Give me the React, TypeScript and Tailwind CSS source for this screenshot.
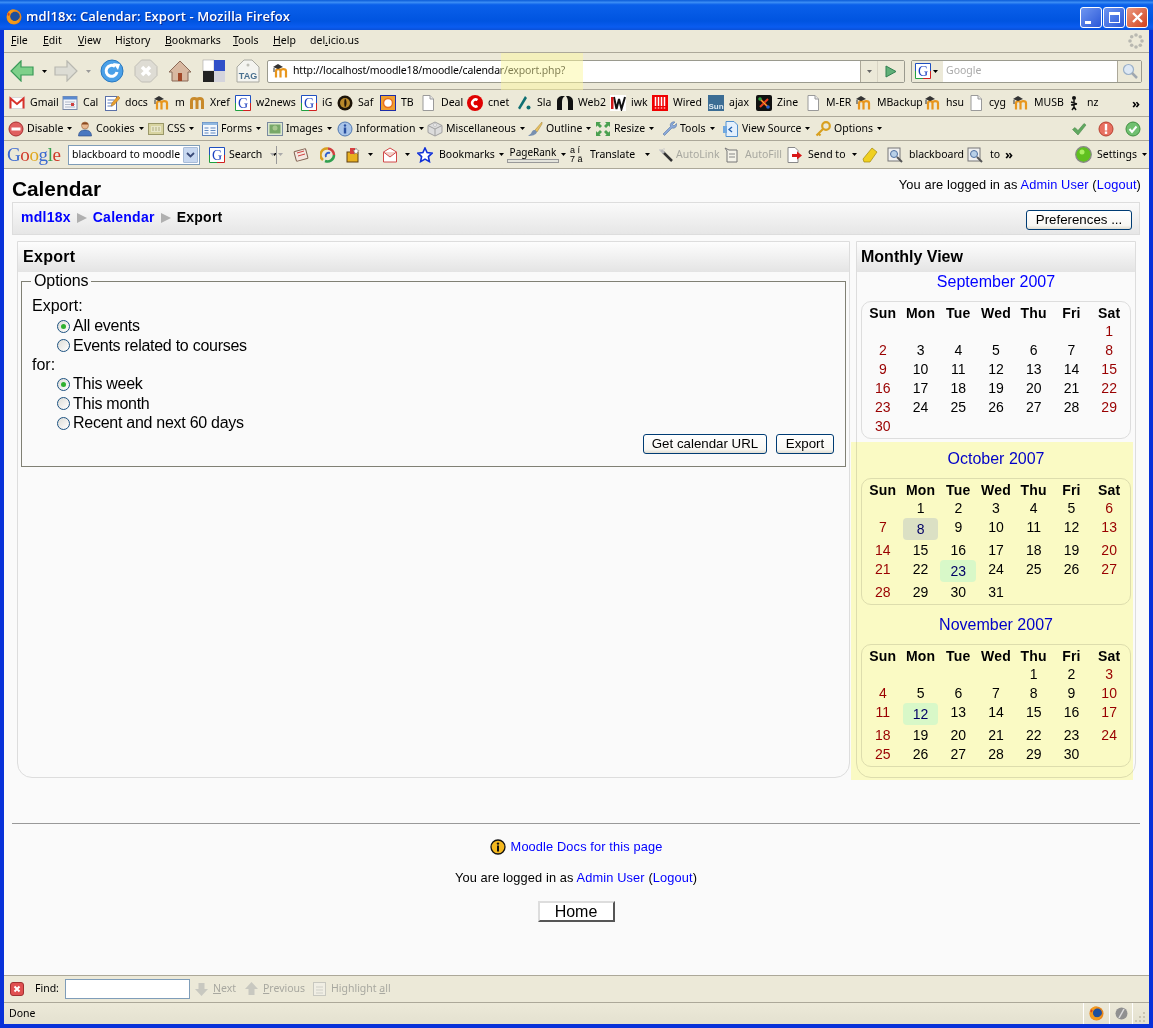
import React from "react";

const S = ({ children, s = 16, v = 16 }: { children: React.ReactNode; s?: number; v?: number }) => (
  <svg width={s} height={s} viewBox={`0 0 ${v} ${v}`} className="shrink-0 block">{children}</svg>
);

const Fx = ({ s = 16 }: { s?: number }) => (
  <S s={s}>
    <circle cx="8" cy="8" r="7.500" fill="#e8861a" />
    <circle cx="9" cy="7.500" r="4.800" fill="#1f4f9c" />
    <path d="M1 7c0-4 3-6.500 6-6.500 1 0 2 .2 3 .7-2 0-3 1-3.400 2C4.500 4 3.500 6 4 8.500c.5 2.500 3 4 5.500 3.500 2-.4 3.500-2 4-3.500.2 2-1.500 6-5.500 6.500C3.500 15.500 .8 11.500 1 7z" fill="#f39a1c" />
    <path d="M2 3c.5 1 1 1.500 2 1.500L3 7 1.500 6z" fill="#d9441a" />
  </S>
);
const Caret = ({ c = "#000" }: { c?: string }) => (
  <svg width="5" height="3" viewBox="0 0 5 3" className="shrink-0 block"><path d="M0 0h5L2.500 3z" fill={c} /></svg>
);
const Moodle = ({ s = 16 }: { s?: number }) => (
  <S s={s}>
    <path d="M3 14.500V8c0-2.500 4.500-2.500 4.500 0v6.500M7.500 8c0-2.500 5.500-2.500 5.500 0v6.500" fill="none" stroke="#e8961c" strokeWidth="2.200" />
    <path d="M0 4l5-3 5 3-5 2z" fill="#333" />
    <path d="M1 5v4" stroke="#333" strokeWidth="1" />
  </S>
);
const MBrown = () => (
  <S>
    <path d="M2.500 14V6c0-3.500 5.500-3.500 5.500 0v8M8 6c0-3.500 5.500-3.500 5.500 0v8" fill="none" stroke="#c98a2a" strokeWidth="3" />
  </S>
);
const G = () => (
  <svg width="16" height="16" viewBox="0 0 16 16" className="shrink-0 block">
    <rect x="1" y="1" width="14" height="14" fill="#fff" />
    <path d="M.5 8V.5H15.500V8" fill="none" stroke="#2050c0" />
    <path d="M15.500 8V15.500H8" fill="none" stroke="#d02020" />
    <path d="M8 15.500H.5V8" fill="none" stroke="#20a040" />
    <text x="8" y="13" textAnchor="middle" fontFamily="'Liberation Serif',serif" fontSize="14" fill="#1a3fc0">G</text>
  </svg>
);
const Page = () => (
  <S><path d="M3 .5h7l3.500 3.500v11.500H3z" fill="#fff" stroke="#9a9a9a" /><path d="M10 .5V4h3.500" fill="#e8e8e8" stroke="#9a9a9a" /></S>
);
const Gmail = () => (
  <S><rect x=".5" y="2.500" width="15" height="11" fill="#fff" stroke="#d8d8d8" /><path d="M1.500 13.500V3.500L8 9l6.500-5.500v10" fill="none" stroke="#d8322a" strokeWidth="2" /></S>
);
const Cal = () => (
  <S><rect x="1" y="1.500" width="14" height="13" fill="#f4f6fa" stroke="#7a8aa8" /><rect x="1" y="1.500" width="14" height="3" fill="#5a8ad0" /><path d="M3 7h10M3 9.500h10M3 12h10" stroke="#b0b8c8" /><rect x="9" y="8" width="3" height="3" fill="#d04040" /></S>
);
const Docs = () => (
  <S><rect x="1.500" y="1.500" width="11" height="14" fill="#fff" stroke="#5a70a8" /><path d="M3.500 5h7M3.500 8h7M3.500 11h5" stroke="#6080c0" /><path d="M14 1l2 2-6 7-3 1 1-3z" fill="#e8a030" stroke="#a06818" strokeWidth=".5" /></S>
);
const Saf = () => (
  <S><circle cx="8" cy="8" r="7.500" fill="#1c1408" /><circle cx="8" cy="8" r="5" fill="#b8882a" /><path d="M8 3.500c2 1.500 2 7 0 9-1-2-1-7 0-9z" fill="#201408" /></S>
);
const TB = () => (
  <S><rect x=".5" y=".5" width="15" height="15" fill="#f0a030" stroke="#1c2ca8" /><circle cx="8" cy="8" r="4.500" fill="#fff" stroke="#e87020" strokeWidth="1.500" /></S>
);
const Cnet = () => (
  <S><circle cx="8" cy="8" r="8" fill="#e00000" /><path d="M10.500 5a3.500 3.500 0 1 0 0 6" fill="none" stroke="#fff" strokeWidth="2.500" /></S>
);
const Sla = () => (
  <S><path d="M9 1L2 13l2 1.500L11 3z" fill="#0f6f72" /><circle cx="12.500" cy="12.500" r="2" fill="#0f6f72" /></S>
);
const Web2 = () => (
  <S><path d="M0 15V6c0-4 4-5 5-5h3c-2 1-3 3-3 6v8zM16 15V6c0-4-4-5-5-5h-2c1.500 2 2 4 2 6v8z" fill="#111" /></S>
);
const Iwk = () => (
  <S><rect width="16" height="16" fill="#fff" /><path d="M4 2l2.500 12L9 4l2.500 10L15 2" fill="none" stroke="#111" strokeWidth="2" /><rect x="1" y="2" width="2.500" height="12" fill="#d01818" /></S>
);
const Wired = () => (
  <S><rect width="16" height="16" fill="#f00000" /><path d="M3.500 2v9M6.500 2v9M9.500 2v9M12.500 2v9M3.500 12.500v1M6.500 12.500v1M9.500 12.500v1M12.500 12.500v1" stroke="#fff" strokeWidth="1.500" /></S>
);
const Ajax = () => (
  <svg width="16" height="16" viewBox="0 0 16 16" className="shrink-0 block"><rect width="16" height="16" fill="#3c6d94" /><text x="8" y="13.500" textAnchor="middle" fontFamily="'Liberation Sans',sans-serif" fontSize="8" fontWeight="700" fill="#dde8f0">Sun</text></svg>
);
const Zine = () => (
  <S><rect width="16" height="16" rx="2" fill="#111" /><path d="M4 4l8 8M12 4l-8 8" stroke="#e84020" strokeWidth="2" /><path d="M4 4l8 8" stroke="#e8c020" strokeWidth="1" /><circle cx="4" cy="4" r="1.800" fill="#30a040" /><circle cx="12" cy="12" r="1.800" fill="#2060d0" /></S>
);
const Nz = () => (
  <S><circle cx="8" cy="3" r="2" fill="#111" /><path d="M8 5v7M5 7l6 2M5 10l6-1M6 15l2-3 2 3" stroke="#111" strokeWidth="1.500" fill="none" /></S>
);
const Disable = () => (
  <S><circle cx="8" cy="8" r="7" fill="#e06060" stroke="#a83030" /><rect x="3.500" y="6.500" width="9" height="3" fill="#fff" /></S>
);
const Cookies = () => (
  <S><circle cx="8" cy="4.500" r="3.500" fill="#e8b890" stroke="#a06840" strokeWidth=".6" /><path d="M4.500 3.500c1-3 6-3 7 0z" fill="#8a4a20" /><path d="M1.500 15c0-4 2.500-6 6.500-6s6.500 2 6.500 6z" fill="#4a78c0" stroke="#2a4880" strokeWidth=".6" /></S>
);
const Css = () => (
  <svg width="16" height="16" viewBox="0 0 16 16" className="shrink-0 block"><rect x=".5" y="2.500" width="15" height="11" fill="#d8d4a0" stroke="#9a9868" /><rect x="3" y="5" width="10" height="6" fill="#e8e6c8" /><path d="M4 7h8M4 9h8" stroke="#b0ae80" strokeDasharray="2 1" /></svg>
);
const Forms = () => (
  <S><rect x=".5" y="1.500" width="15" height="13" fill="#f4f8fc" stroke="#5a80b8" /><rect x=".5" y="1.500" width="15" height="2.500" fill="#90b8e0" /><path d="M2.500 7h4M2.500 9.500h4M2.500 12h4M8.500 7h5M8.500 9.500h5M8.500 12h5" stroke="#6088c0" /></S>
);
const Images = () => (
  <S><rect x=".5" y="1.500" width="15" height="13" fill="#dce8d0" stroke="#7a8aa0" /><rect x="2.500" y="3.500" width="11" height="9" fill="#78a868" /><circle cx="8" cy="7" r="2.500" fill="#a8c890" /></S>
);
const Info = () => (
  <S><circle cx="8" cy="8" r="7" fill="#a8c4e8" stroke="#5078b0" /><circle cx="8" cy="4.500" r="1.200" fill="#2a50a0" /><rect x="6.800" y="6.500" width="2.400" height="6" fill="#2a50a0" /></S>
);
const Misc = () => (
  <S><path d="M8 1l7 3.500v7L8 15l-7-3.500v-7z" fill="#dcdcdc" stroke="#a0a0a0" /><path d="M1 4.500L8 8l7-3.500M8 8v7" fill="none" stroke="#a0a0a0" /><circle cx="8" cy="4" r="1.500" fill="#f0f0f0" stroke="#a8a8a8" strokeWidth=".5" /></S>
);
const Outline = () => (
  <S><path d="M15 1l-7 8 2 2 5-8z" fill="#e8c060" stroke="#a08030" strokeWidth=".5" /><path d="M8 9c-3 0-3 2-4 3.500L1 15c4 0 8-1 9-4z" fill="#7890b0" /></S>
);
const Resize = () => (
  <S><path d="M1 1h5L4.500 2.500 7 5 5 7 2.500 4.500 1 6zM15 1v5l-1.500-1.500L11 7 9 5l2.500-2.500L10 1zM1 15v-5l1.500 1.500L5 9l2 2-2.500 2.500L6 15zM15 15h-5l1.500-1.500L9 11l2-2 2.500 2.500L15 10z" fill="#4aa050" /></S>
);
const Tools = () => (
  <S><path d="M2 13l7.500-7.500a3.500 3.500 0 0 1 4.500-4.500l-2.500 2.500 1.500 1.500L15.500 2.500a3.500 3.500 0 0 1-4.500 4.500L3.500 14.500z" fill="#8aa8d8" stroke="#5878a8" strokeWidth=".6" /></S>
);
const Source = () => (
  <S><path d="M3 .5h8l3.500 3.500v11.500H3z" fill="#e4f0fc" stroke="#5090d0" /><path d="M9 6L6 8.500 9 11" fill="none" stroke="#2060b0" strokeWidth="1.300" /><rect x="0" y="5" width="4" height="7" fill="#70a8e0" /></S>
);
const Key = () => (
  <S><circle cx="11" cy="5" r="3.800" fill="none" stroke="#d8a020" strokeWidth="2.200" /><path d="M8 8l-6.500 6.500M3.500 12.500l2 2" stroke="#d8a020" strokeWidth="2.200" /></S>
);
const Check = () => (
  <S><path d="M1.500 8.500l2.500-2 3 3 6-7 2 1.500-8 10z" fill="#60a860" stroke="#408040" strokeWidth=".5" /></S>
);
const Warn = () => (
  <S><circle cx="8" cy="8" r="7" fill="#e87060" stroke="#b84030" /><rect x="6.800" y="3" width="2.400" height="6.500" fill="#fff" /><rect x="6.800" y="10.500" width="2.400" height="2.400" fill="#fff" /></S>
);
const Ok = () => (
  <S><circle cx="8" cy="8" r="7" fill="#70c070" stroke="#409040" /><path d="M4.500 8l2.500 3 4.500-5.500" fill="none" stroke="#fff" strokeWidth="2" /></S>
);
const SearchDoc = () => (
  <S><rect x="1" y="1" width="12" height="13" fill="#f0f0f0" stroke="#777" /><circle cx="7" cy="7" r="3.500" fill="#b8d0e8" stroke="#5070a0" /><path d="M10 10l5 5" stroke="#555" strokeWidth="2" /></S>
);

function Label({ t, c = "text-black" }: { t: string; c?: string }) {
  return <span className={`whitespace-nowrap ${c}`}>{t}</span>;
}

const bookmarks: [string, string, React.ReactNode][] = [
  ["w-[53px]", "Gmail", <Gmail />],
  ["w-[42px]", "Cal", <Cal />],
  ["w-[50px]", "docs", <Docs />],
  ["w-[35px]", "m", <Moodle />],
  ["w-[46px]", "Xref", <MBrown />],
  ["w-[66px]", "w2news", <G />],
  ["w-[36px]", "iG", <G />],
  ["w-[43px]", "Saf", <Saf />],
  ["w-[40px]", "TB", <TB />],
  ["w-[47px]", "Deal", <Page />],
  ["w-[49px]", "cnet", <Cnet />],
  ["w-[41px]", "Sla", <Sla />],
  ["w-[53px]", "Web2", <Web2 />],
  ["w-[42px]", "iwk", <Iwk />],
  ["w-[56px]", "Wired", <Wired />],
  ["w-[48px]", "ajax", <Ajax />],
  ["w-[49px]", "Zine", <Zine />],
  ["w-[51px]", "M-ER", <Page />],
  ["w-[69px]", "MBackup", <Moodle />],
  ["w-[43px]", "hsu", <Moodle />],
  ["w-[45px]", "cyg", <Page />],
  ["w-[53px]", "MUSB", <Moodle />],
  ["w-[48px]", "nz", <Nz />],
];

const dev: [string, string, React.ReactNode][] = [
  ["w-[69px]", "Disable", <Disable />],
  ["w-[71px]", "Cookies", <Cookies />],
  ["w-[54px]", "CSS", <Css />],
  ["w-[65px]", "Forms", <Forms />],
  ["w-[70px]", "Images", <Images />],
  ["w-[90px]", "Information", <Info />],
  ["w-[100px]", "Miscellaneous", <Misc />],
  ["w-[68px]", "Outline", <Outline />],
  ["w-[66px]", "Resize", <Resize />],
  ["w-[62px]", "Tools", <Tools />],
  ["w-[92px]", "View Source", <Source />],
  ["w-[80px]", "Options", <Key />],
];

function Menu() {
  const items: [string, string, string, string][] = [
    ["w-[32px]", "", "F", "ile"],
    ["w-[35px]", "", "E", "dit"],
    ["w-[37px]", "", "V", "iew"],
    ["w-[50px]", "Hi", "s", "tory"],
    ["w-[68px]", "", "B", "ookmarks"],
    ["w-[40px]", "", "T", "ools"],
    ["w-[37px]", "", "H", "elp"],
    ["w-[60px]", "del", ".", "icio.us"],
  ];
  return (
    <div className="h-[23px] flex items-center pl-[7px] bg-[#ece9d8] border-b border-[#aca899]">
      {items.map(([w, a, u, b]) => (
        <div key={a + u + b} className={`${w} shrink-0 whitespace-nowrap`}>
          {a}<span className="underline">{u}</span>{b}
        </div>
      ))}
      <div className="ml-auto mr-[5px]">
        <svg width="16" height="16" viewBox="0 0 16 16" className="block">
          <g fill="#b8b8b0">
            <circle cx="8" cy="2" r="1.800" /><circle cx="12.300" cy="3.700" r="1.800" /><circle cx="14" cy="8" r="1.800" /><circle cx="12.300" cy="12.300" r="1.800" />
            <circle cx="8" cy="14" r="1.800" /><circle cx="3.700" cy="12.300" r="1.800" /><circle cx="2" cy="8" r="1.800" /><circle cx="3.700" cy="3.700" r="1.800" />
          </g>
        </svg>
      </div>
    </div>
  );
}

function Nav() {
  return (
    <div className="h-[37px] flex items-center bg-[#ece9d8] border-b border-[#aca899] pl-[6px] relative">
      <svg width="24" height="22" viewBox="0 0 24 22" className="shrink-0 block">
        <path d="M11 1L1 11l10 10v-6h12V7H11z" fill="#7ed08a" stroke="#3a9a58" strokeWidth="1.200" />
      </svg>
      <div className="ml-[8px] w-[12px]"><Caret /></div>
      <svg width="24" height="22" viewBox="0 0 24 22" className="shrink-0 block">
        <path d="M13 1l10 10-10 10v-6H1V7h12z" fill="#dcdcd4" stroke="#b8b8b0" strokeWidth="1.200" />
      </svg>
      <div className="ml-[8px] w-[14px]"><Caret c="#999" /></div>
      <svg width="24" height="24" viewBox="0 0 24 24" className="shrink-0 block">
        <circle cx="12" cy="12" r="11" fill="#4aa0e8" stroke="#2878c0" />
        <path d="M17 13a5.500 5.500 0 1 1-2-5.500" fill="none" stroke="#fff" strokeWidth="3" />
        <path d="M13 4l7 1-2 6z" fill="#fff" />
      </svg>
      <div className="w-[10px]" />
      <svg width="24" height="24" viewBox="0 0 24 24" className="shrink-0 block">
        <path d="M7.500 1h9L23 7.500v9L16.500 23h-9L1 16.500v-9z" fill="#dedcd4" stroke="#c0beb6" />
        <path d="M8 8l8 8M16 8l-8 8" stroke="#fff" strokeWidth="3.500" />
      </svg>
      <div className="w-[10px]" />
      <svg width="24" height="24" viewBox="0 0 24 24" className="shrink-0 block">
        <path d="M12 2L1 13h3v9h16v-9h3z" fill="#d8b8a0" stroke="#8a6a58" />
        <rect x="10" y="14" width="4" height="8" fill="#a04828" />
      </svg>
      <div className="w-[10px]" />
      <svg width="24" height="24" viewBox="0 0 24 24" className="shrink-0 block">
        <rect x="1" y="1" width="11" height="11" fill="#fff" stroke="#999" strokeWidth=".5" />
        <rect x="12" y="1" width="11" height="11" fill="#3050c8" />
        <rect x="1" y="12" width="11" height="11" fill="#222" />
        <rect x="12" y="12" width="11" height="11" fill="#d4d4dc" />
      </svg>
      <div className="w-[10px]" />
      <svg width="24" height="24" viewBox="0 0 24 24" className="shrink-0 block">
        <path d="M8 1h8l7 7v15H1V8z" fill="#f4f4f0" stroke="#a8a8a0" />
        <circle cx="12" cy="6" r="1.500" fill="#c0c0b8" />
        <text x="12" y="20" textAnchor="middle" fontFamily="'Liberation Sans',sans-serif" fontSize="9" fontWeight="700" fill="#4a7090">TAG</text>
      </svg>
      <div className="w-[7px]" />
      <div className="w-[638px] h-[23px] flex items-stretch bg-white border border-[#9a9a8e] rounded-[2px] shrink-0">
        <div className="flex items-center pl-[5px] gap-[4px] flex-1">
          <Moodle />
          <span className="text-[10.5px] tracking-[-0.15px]">http://localhost/moodle18/moodle/calendar/export.php?</span>
        </div>
        <div className="w-[17px] border-l border-[#aca899] bg-[#ece9d8] flex items-center justify-center"><Caret c="#666" /></div>
        <div className="w-[27px] border-l border-[#d8d4c4] bg-[#ece9d8] flex items-center justify-center">
          <svg width="12" height="13" viewBox="0 0 12 13" className="block"><path d="M1 1l10 5.500L1 12z" fill="#60b078" stroke="#308050" /></svg>
        </div>
      </div>
      <div className="w-[6px]" />
      <div className="w-[231px] h-[23px] flex items-stretch bg-white border border-[#9a9a8e] rounded-[2px] shrink-0">
        <div className="w-[31px] bg-[#ece9d8] flex items-center pl-[3px] gap-[2px]"><G /><Caret /></div>
        <div className="flex-1 flex items-center pl-[3px] text-[#aaa]">Google</div>
        <div className="w-[24px] border-l border-[#aca899] bg-[#ece9d8] flex items-center justify-center">
          <svg width="16" height="16" viewBox="0 0 16 16" className="block"><circle cx="6.500" cy="6.500" r="5" fill="#dde8f4" stroke="#9ab0c8" strokeWidth="1.200" /><path d="M10 10l5 5" stroke="#a0a8b0" strokeWidth="2.500" /></svg>
        </div>
      </div>
      <div className="absolute left-[497px] top-0 w-[82px] h-[37px] bg-[#fcf8a0] opacity-50 pointer-events-none" />
    </div>
  );
}

function Bookmarks() {
  return (
    <div className="h-[27px] flex items-center bg-[#ece9d8] border-b border-[#aca899] pl-[5px]">
      {bookmarks.map(([w, t, ic]) => (
        <div key={t} className={`${w} flex items-center gap-[5px] shrink-0`}>{ic}<Label t={t} /></div>
      ))}
      <div className="ml-auto mr-[9px] text-[13px] font-bold leading-none">»</div>
    </div>
  );
}

function DevBar() {
  return (
    <div className="h-[24px] flex items-center bg-[#ece9d8] border-b border-[#aca899] pl-[4px]">
      {dev.map(([w, t, ic]) => (
        <div key={t} className={`${w} flex items-center shrink-0`}>
          <div className="w-[19px] shrink-0">{ic}</div>
          <Label t={t} />
          <div className="ml-[4px]"><Caret /></div>
        </div>
      ))}
      <div className="ml-auto flex gap-[11px] pr-[8px]"><Check /><Warn /><Ok /></div>
    </div>
  );
}

function GoogleBar() {
  return (
    <div className="h-[28px] flex items-center bg-[#ece9d8] border-b border-[#aca899] pl-[2px]">
      <div className="w-[62px] pl-[1px] [font-family:'Liberation_Serif',serif] text-[19px] tracking-[-0.4px] leading-none shrink-0">
        <span className="text-[#3a68d0]">G</span><span className="text-[#d03a2a]">o</span><span className="text-[#e0a820]">o</span><span className="text-[#3a68d0]">g</span><span className="text-[#3aa050]">l</span><span className="text-[#d03a2a]">e</span>
      </div>
      <div className="w-[132px] h-[20px] bg-white border border-[#7f9db9] flex items-center pl-[3px] shrink-0">
        <span className="flex-1 whitespace-nowrap">blackboard to moodle</span>
        <div className="w-[15px] h-[16px] mr-px bg-[#c8d8f0] border border-[#a8bcd8] rounded-[1px] flex items-center justify-center">
          <svg width="9" height="6" viewBox="0 0 9 6" className="block"><path d="M1 1l3.500 3.500L8 1" fill="none" stroke="#3a4a78" strokeWidth="1.800" /></svg>
        </div>
      </div>
      <div className="w-[9px]" />
      <div className="w-[61px] flex items-center gap-[4px] shrink-0"><G /><Label t="Search" /><div className="ml-[6px]"><Caret /></div></div>
      <div className="w-[23px] flex items-center gap-[1px] shrink-0">
        <Caret c="#aaa" /><div className="w-px h-[18px] bg-[#999]" /><Caret c="#aaa" />
      </div>
      <div className="w-[27px] shrink-0">
        <S><rect x="2" y="3" width="12" height="10" rx="1" fill="#f4e8e0" stroke="#806050" transform="rotate(-15 8 8)" /><path d="M4 6l7-2M5 9l7-2" stroke="#d04040" /></S>
      </div>
      <div className="w-[25px] shrink-0">
        <S><path d="M3 13A6.500 6.500 0 0 1 8 1.500" fill="none" stroke="#d8a020" strokeWidth="2.500" /><path d="M8 1.500A6.500 6.500 0 0 1 14 8" fill="none" stroke="#d04040" strokeWidth="2.500" /><path d="M14 8a6.500 6.500 0 0 1-9 6" fill="none" stroke="#30a050" strokeWidth="2.500" /><path d="M6 10a3 3 0 0 1 4-4" fill="none" stroke="#3060d0" strokeWidth="2" /></S>
      </div>
      <div className="w-[37px] flex items-center gap-[7px] shrink-0">
        <S><rect x="2" y="5" width="11" height="10" fill="#e8b020" stroke="#604010" /><rect x="5" y="1" width="5" height="6" fill="#d84040" /><path d="M11 1l1 2 2 .5-1.500 1.500.3 2-1.800-1-1.800 1 .3-2L8 3.500 10 3z" fill="#fff" stroke="#444" strokeWidth=".4" /></S>
        <Caret />
      </div>
      <div className="w-[35px] flex items-center gap-[7px] shrink-0">
        <S><path d="M1.500 5L8 1l6.500 4v10h-13z" fill="#fff" stroke="#d04848" /><path d="M1.500 5L8 10l6.500-5" fill="#f4d0c8" stroke="#d04848" /></S>
        <Caret />
      </div>
      <div className="w-[22px] shrink-0">
        <S><path d="M8 1l2.100 4.600 5 .6-3.700 3.400 1 5L8 12.100 3.600 14.600l1-5L.9 6.200l5-.6z" fill="#fff" stroke="#1030d8" strokeWidth="1.600" /></S>
      </div>
      <div className="w-[66px] flex items-center shrink-0"><Label t="Bookmarks" /><div className="ml-[4px]"><Caret /></div></div>
      <div className="w-[56px] flex flex-col items-center shrink-0">
        <span className="text-[10px] leading-[11px] whitespace-nowrap">PageRank</span>
        <div className="w-[52px] h-[4px] mt-[1px] bg-[#e4e4dc] border border-[#999]" />
      </div>
      <div className="w-[9px] shrink-0"><Caret /></div>
      <div className="w-[20px] text-[9px] leading-[9px] shrink-0 [font-family:'Liberation_Sans',sans-serif]">
        <div>a í</div><div>7 ä</div>
      </div>
      <div className="w-[67px] flex items-center shrink-0"><Label t="Translate" /><div className="ml-[10px]"><Caret /></div></div>
      <div className="w-[67px] flex items-center gap-[3px] shrink-0">
        <S><path d="M2 3l2 0M3 2v2M7 1v2" stroke="#ccc" /><path d="M6 5l9 9" stroke="#333" strokeWidth="2.500" /><path d="M4 3l3 3" stroke="#bbb" strokeWidth="3" /></S>
        <Label t="AutoLink" c="text-[#a8a8a0]" />
      </div>
      <div className="w-[62px] flex items-center gap-[5px] shrink-0">
        <S><path d="M1 1l4 2h8v12H3V4z" fill="#f4f2e8" stroke="#777" /><path d="M5 7h6M5 10h6" stroke="#888" /></S>
        <Label t="AutoFill" c="text-[#a8a8a0]" />
      </div>
      <div className="w-[76px] flex items-center gap-[6px] shrink-0">
        <S><path d="M2 .5h7l3 3V15.500H2z" fill="#fff" stroke="#888" /><path d="M6 7h5V4.500l5 4-5 4V10H6z" fill="#d81818" /></S>
        <Label t="Send to" /><Caret />
      </div>
      <div className="w-[25px] shrink-0">
        <S><path d="M10 1l5 4-7 10-6 0-1-3z" fill="#f0d020" stroke="#a08810" strokeWidth=".7" /></S>
      </div>
      <div className="w-[80px] flex items-center gap-[6px] shrink-0">
        <SearchDoc />
        <Label t="blackboard" />
      </div>
      <div className="w-[38px] flex items-center gap-[7px] shrink-0">
        <SearchDoc />
        <Label t="to" />
      </div>
      <div className="text-[13px] font-bold leading-none">»</div>
      <div className="ml-auto flex items-center gap-[5px] pr-[2px]">
        <svg width="17" height="17" viewBox="0 0 17 17" className="block"><circle cx="8.500" cy="8.500" r="7.800" fill="#60c020" stroke="#888" strokeWidth="1.200" /><circle cx="7" cy="6" r="2.500" fill="#a8f060" /></svg>
        <Label t="Settings" /><Caret />
      </div>
    </div>
  );
}

function Radio({ on }: { on?: boolean }) {
  return (
    <div className="w-[13px] h-[13px] rounded-full border border-[#1d5281] bg-[linear-gradient(135deg,#dcdcd7,#ffffff)] flex items-center justify-center shrink-0">
      {on && <div className="w-[5px] h-[5px] rounded-full bg-[#2fb030]" />}
    </div>
  );
}
function Opt({ on, t, h = "h-[19px]" }: { on?: boolean; t: string; h?: string }) {
  return (
    <div className={`${h} flex items-center pl-[25px] gap-[3px] whitespace-nowrap tracking-[-0.27px]`}>
      <Radio on={on} />{t}
    </div>
  );
}

function XpBtn({ t, w }: { t: string; w: string }) {
  return (
    <div className={`${w} h-[20px] flex items-center justify-center border border-[#003c74] rounded-[3px] bg-[linear-gradient(#ffffff,#f8f7f3_80%,#e0ddd2)] text-[13.3px] leading-none whitespace-nowrap`}>
      {t}
    </div>
  );
}

const A = ({ children }: { children: React.ReactNode }) => <span className="text-[#0000ff]">{children}</span>;

function Month({ title, first, days, hl, tall, mt }: { title: string; first: number; days: number; hl: Record<number, string>; tall: number[]; mt: string }) {
  const cells: (number | null)[] = [];
  for (let i = 0; i < first; i++) cells.push(null);
  for (let i = 1; i <= days; i++) cells.push(i);
  while (cells.length % 7) cells.push(null);
  const rows: (number | null)[][] = [];
  for (let i = 0; i < cells.length; i += 7) rows.push(cells.slice(i, i + 7));
  const heads = ["Sun", "Mon", "Tue", "Wed", "Thu", "Fri", "Sat"];
  return (
    <>
      <div className={`${mt} h-[19px] leading-[19px] text-center text-[16px] text-[#0000ff]`}>{title}</div>
      <div className="mt-[10px] mx-[4px] border border-[#dddddd] rounded-[10px] pt-[2px] pb-[2px] px-[2px]">
        <div className="grid grid-cols-7 h-[18px]">
          {heads.map((h) => (
            <div key={h} className="h-[19px] leading-[19px] text-center font-bold text-[14px] tracking-[0.2px]">{h}</div>
          ))}
        </div>
        {rows.map((r, ri) => (
          <div key={ri} className={`grid grid-cols-7 ${tall.includes(ri) ? "h-[23px]" : "h-[19px]"}`}>
            {r.map((d, ci) => {
              const weekend = ci === 0 || ci === 6;
              if (d !== null && hl[d]) {
                return (
                  <div key={ci} className={`h-[22px] leading-[23px] mx-[1px] rounded-[4px] text-center text-[14px] text-[#000080] ${hl[d]}`}>{d}</div>
                );
              }
              return (
                <div key={ci} className={`h-[19px] leading-[19px] text-center text-[14px] ${weekend ? "text-[#990000]" : "text-black"}`}>{d}</div>
              );
            })}
          </div>
        ))}
      </div>
    </>
  );
}

function Content() {
  return (
    <div className="flex-1 bg-[#fafafa] pl-[8px] pr-[9px] [font-family:'Liberation_Sans',Arial,sans-serif] text-black relative">
      <div className="h-[33px] flex justify-between -mr-px">
        <h1 className="text-[20.8px] font-bold leading-[40px]">Calendar</h1>
        <div className="text-[12.8px] leading-[32px] tracking-[0.125px] whitespace-nowrap">You are logged in as <A>Admin User</A> (<A>Logout</A>)</div>
      </div>
      <div className="h-[33px] border border-[#dddddd] bg-[linear-gradient(#fafafa,#e6e6e6)] flex items-center justify-between pl-[8px] pr-[7px]">
        <div className="flex items-center text-[14px] font-bold tracking-[0.25px] whitespace-nowrap -mt-[2px]">
          <span className="text-[#0000ff]">mdl18x</span>
          <svg width="10" height="10" viewBox="0 0 10 10" className="mx-[6px] block"><path d="M0 0l10 5-10 5z" fill="#b0b0b0" /></svg>
          <span className="text-[#0000ff]">Calendar</span>
          <svg width="10" height="10" viewBox="0 0 10 10" className="mx-[6px] block"><path d="M0 0l10 5-10 5z" fill="#b0b0b0" /></svg>
          <span>Export</span>
        </div>
        <div className="mt-[3px]"><XpBtn t="Preferences ..." w="w-[106px]" /></div>
      </div>
      <div className="flex mt-[6px] ml-[5px] gap-[6px] items-stretch">
        <div className="w-[833px] h-[537px] border border-[#dddddd] rounded-b-[15px] flex flex-col">
          <div className="h-[30px] bg-[linear-gradient(#fdfdfd,#e4e4e4)] px-[5px] text-[16px] font-bold leading-[29px] tracking-[0.3px] shrink-0">Export</div>
          <div className="px-[3px]">
            <fieldset className="border border-[#808074] text-[16px] pb-[12px]">
              <legend className="ml-[9px] px-[3px] leading-[18px] tracking-[-0.1px]">Options</legend>
              <div className="pt-[6px] pl-[10px] pr-[11px]">
                <div className="h-[20px] flex items-center">Export:</div>
                <Opt on t="All events" h="h-[20px]" />
                <Opt t="Events related to courses" />
                <div className="h-[19px] flex items-center">for:</div>
                <Opt on t="This week" h="h-[20px]" />
                <Opt t="This month" />
                <Opt t="Recent and next 60 days" h="h-[20px]" />
                <div className="flex justify-end gap-[9px] mt-px">
                  <XpBtn t="Get calendar URL" w="w-[124px]" />
                  <XpBtn t="Export" w="w-[58px]" />
                </div>
              </div>
            </fieldset>
          </div>
        </div>
        <div className="w-[280px] h-[537px] border border-[#dddddd] rounded-b-[15px] relative">
          <div className="h-[30px] bg-[linear-gradient(#fdfdfd,#e4e4e4)] pl-[4px] text-[16px] font-bold leading-[29px]">Monthly View</div>
          <Month title="September 2007" first={6} days={30} hl={{}} tall={[]} mt="mt-0" />
          <Month title="October 2007" first={1} days={31} hl={{ 8: "bg-[#dbe0fa]", 23: "bg-[#d8f8ff]" }} tall={[1, 3]} mt="mt-[10px]" />
          <Month title="November 2007" first={4} days={30} hl={{ 12: "bg-[#d8f8ff]" }} tall={[2]} mt="mt-[10px]" />
          <div className="absolute left-[-6px] top-[200px] w-[282px] h-[338px] bg-[#ffffc8] mix-blend-multiply pointer-events-none" />
        </div>
      </div>
      <div className="mt-[45px] h-px bg-[#999999]" />
      <div className="mt-[15px] flex justify-center items-center gap-[5px] text-[12.8px] tracking-[0.125px] h-[16px] whitespace-nowrap">
        <svg width="16" height="16" viewBox="0 0 16 16" className="block"><circle cx="8" cy="8" r="7" fill="#f4b820" stroke="#111" strokeWidth="1.300" /><circle cx="8" cy="4.600" r="1.200" fill="#111" /><rect x="7" y="6.500" width="2" height="6" fill="#111" /></svg>
        <A>Moodle Docs for this page</A>
      </div>
      <div className="mt-[15px] h-[16px] leading-[16px] text-center text-[12.8px] tracking-[0.125px] whitespace-nowrap">You are logged in as <A>Admin User</A> (<A>Logout</A>)</div>
      <div className="mt-[15px] flex justify-center">
        <div className="w-[77px] h-[21px] border-2 border-t-[#dddddd] border-l-[#dddddd] border-r-[#555555] border-b-[#555555] bg-white text-[16px] leading-[17px] text-center">Home</div>
      </div>
    </div>
  );
}

function FindBar() {
  return (
    <div className="h-[28px] bg-[#ece9d8] border-t border-[#aca899] border-b flex items-center pl-[6px] shrink-0">
      <svg width="14" height="14" viewBox="0 0 14 14" className="block shrink-0"><rect x=".5" y=".5" width="13" height="13" rx="2.500" fill="#e05050" stroke="#a03030" /><path d="M4.500 4.500l5 5M9.500 4.500l-5 5" stroke="#fff" strokeWidth="2" /></svg>
      <span className="ml-[11px] w-[30px] whitespace-nowrap">Find:</span>
      <div className="w-[125px] h-[20px] bg-white border border-[#7f9db9] shrink-0" />
      <div className="ml-[5px] w-[50px] flex items-center gap-[5px] shrink-0 text-[#a8a8a0]">
        <svg width="13" height="14" viewBox="0 0 13 14" className="block"><path d="M3.500 1h6v6H13l-6.500 7L0 7h3.500z" fill="#c8c8c0" /></svg>
        <span><span className="underline">N</span>ext</span>
      </div>
      <div className="w-[68px] flex items-center gap-[5px] shrink-0 text-[#a8a8a0]">
        <svg width="13" height="14" viewBox="0 0 13 14" className="block"><path d="M3.500 13h6V7H13L6.500 0 0 7h3.500z" fill="#c8c8c0" /></svg>
        <span><span className="underline">P</span>revious</span>
      </div>
      <div className="flex items-center gap-[5px] shrink-0 text-[#a8a8a0]">
        <svg width="13" height="14" viewBox="0 0 13 14" className="block"><rect x=".5" y=".5" width="12" height="13" fill="#f0eee4" stroke="#c8c8c0" /><path d="M3 5h7M3 8h7M3 11h7" stroke="#d0d0c8" /></svg>
        <span>Highlight <span className="underline">a</span>ll</span>
      </div>
    </div>
  );
}

function StatusBar() {
  return (
    <div className="h-[21px] bg-[linear-gradient(#ece9d8,#e4e1d0)] flex items-center pl-[5px] shrink-0">
      <span className="flex-1">Done</span>
      <div className="w-[26px] h-full border-l border-white flex items-center justify-center"><Fx s={15} /></div>
      <div className="w-[23px] h-full border-l border-white flex items-center justify-center">
        <svg width="13" height="13" viewBox="0 0 13 13" className="block"><circle cx="6.500" cy="6.500" r="6" fill="#909090" /><path d="M9 2L4 11" stroke="#ddd" strokeWidth="1.500" /></svg>
      </div>
      <div className="w-[17px] h-full border-l border-white flex items-end justify-end pr-[3px] pb-[1px]">
        <svg width="11" height="11" viewBox="0 0 11 11" className="block"><g fill="#c8c4b0"><rect x="8" y="0" width="2" height="2" /><rect x="4" y="4" width="2" height="2" /><rect x="8" y="4" width="2" height="2" /><rect x="0" y="8" width="2" height="2" /><rect x="4" y="8" width="2" height="2" /><rect x="8" y="8" width="2" height="2" /></g></svg>
      </div>
    </div>
  );
}

function WinBtn({ cls, children }: { cls: string; children: React.ReactNode }) {
  return <div className={`w-[22px] h-[21px] rounded-[3px] border border-white flex items-center justify-center ${cls}`}>{children}</div>;
}

export default function App() {
  return (
    <div className="w-[1153px] h-[1028px] bg-[#0831d9] flex flex-col [font-family:'Noto_Sans',Tahoma,sans-serif] text-[10.5px] text-black overflow-hidden">
      <div className="h-[30px] shrink-0 bg-[linear-gradient(#0a5bd8,#3a8cf4_8%,#0a60ea_16%,#0054e0_70%,#0a5cf0_90%,#0a50d8)] flex items-center pl-[6px] pr-[5px] pt-[4px]">
        <Fx />
        <span className="ml-[4px] text-white text-[13px] tracking-[0.1px] [font-family:'Open_Sans',sans-serif] font-semibold [text-shadow:1px_1px_0_#0a2a90] whitespace-nowrap">mdl18x: Calendar: Export - Mozilla Firefox</span>
        <div className="ml-auto flex gap-[1px]">
          <WinBtn cls="bg-[linear-gradient(135deg,#6f96f0,#2a58d8)]"><div className="w-[6px] h-[3px] bg-white mt-[10px] -ml-[6px]" /></WinBtn>
          <WinBtn cls="bg-[linear-gradient(135deg,#6f96f0,#2a58d8)]"><div className="w-[11px] h-[11px] border border-t-[3px] border-white" /></WinBtn>
          <WinBtn cls="bg-[linear-gradient(135deg,#ec9a80,#d0401c)]">
            <svg width="13" height="13" viewBox="0 0 13 13" className="block"><path d="M2 2l9 9M11 2l-9 9" stroke="#fff" strokeWidth="2.400" /></svg>
          </WinBtn>
        </div>
      </div>
      <div className="flex-1 mx-[4px] mb-[4px] flex flex-col min-h-0">
        <Menu />
        <Nav />
        <Bookmarks />
        <DevBar />
        <GoogleBar />
        <Content />
        <FindBar />
        <StatusBar />
      </div>
    </div>
  );
}
